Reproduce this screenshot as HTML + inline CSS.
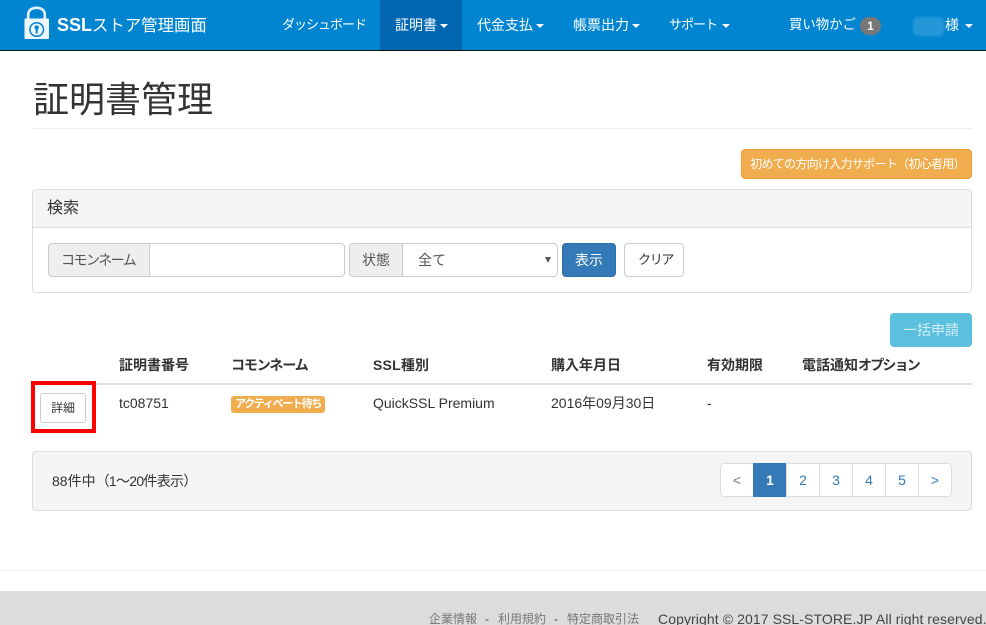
<!DOCTYPE html>
<html lang="ja">
<head>
<meta charset="utf-8">
<title>証明書管理</title>
<style>
html,body{margin:0;padding:0;width:986px;height:625px;overflow:hidden;background:#fff}
body{position:relative;font-family:"Liberation Sans","Noto Sans CJK JP",sans-serif;font-size:14px;color:#333}
.a{position:absolute;white-space:nowrap;box-sizing:border-box}
.nav{color:#fff;top:15px;line-height:20px;font-size:14px}
.caret{display:inline-block;width:0;height:0;border-top:4px solid #fff;border-left:4px solid transparent;border-right:4px solid transparent;vertical-align:middle;margin-left:3px}
.th{top:355px;line-height:20px;font-weight:bold;font-size:14px;color:#333}
.td{top:393px;line-height:20px;font-size:14px;color:#333}
.box{border:1px solid #ddd;border-radius:4px}
.pg{top:463px;height:34px;width:34px;border:1px solid #ddd;margin-left:-1px;background:#fff;color:#337ab7;text-align:center;line-height:32px;font-size:14px}
.ft{top:610px;line-height:18px;font-size:12px;color:#777}
</style>
</head>
<body>
<!-- nav -->
<div class="a" style="left:0;top:0;width:986px;height:51px;background:#0285d1;border-bottom:1px solid #111"></div>
<div class="a" style="left:380px;top:0;width:82px;height:50px;background:#0066b0"></div>
<svg class="a" style="left:24px;top:5px" width="26" height="35" viewBox="0 0 26 35">
<path d="M4.200 15V10C4.200 5 8 2.800 12.500 2.800s8.300 2.200 8.300 7.200V15" fill="none" stroke="#e4f1fa" stroke-width="2.600"/>
<rect x="0.500" y="13.500" width="24.500" height="20.500" rx="1" fill="#eef7fc"/>
<circle cx="12.700" cy="24.500" r="6.800" fill="none" stroke="#0285d1" stroke-width="1.500"/>
<circle cx="12.700" cy="22.500" r="2.200" fill="#0285d1"/>
<rect x="11.700" y="22.500" width="2" height="6" fill="#0285d1"/>
</svg>
<div class="a" style="left:57px;top:13px;line-height:24px;font-size:18px;color:#fff"><b>SSL</b><span style="font-size:16.400px">ストア管理画面</span></div>
<div class="a nav" style="left:282px;font-size:13px;letter-spacing:-1px">ダッシュボード</div>
<div class="a nav" style="left:395px">証明書<span class="caret"></span></div>
<div class="a nav" style="left:477px">代金支払<span class="caret"></span></div>
<div class="a nav" style="left:573px">帳票出力<span class="caret"></span></div>
<div class="a nav" style="left:669px;font-size:13px;letter-spacing:-1px">サポート<span class="caret" style="margin-left:5px"></span></div>
<div class="a nav" style="left:789px;font-size:13.400px">買い物かご</div>
<div class="a" style="left:860px;top:17px;width:21px;height:18px;border-radius:10px;background:#777;color:#fff;font-weight:bold;font-size:12px;line-height:18px;text-align:center">1</div>
<div class="a" style="left:913px;top:17px;width:31px;height:19px;border-radius:5px;background:#2497d8;filter:blur(1px)"></div>
<div class="a nav" style="left:945px">様<span class="caret" style="margin-left:6px"></span></div>

<!-- heading -->
<div class="a" style="left:33px;top:76px;line-height:48px;font-size:36px;color:#333">証明書管理</div>
<div class="a" style="left:32px;top:128px;width:940px;height:1px;background:#eee"></div>

<!-- beginner button -->
<div class="a" style="left:741px;top:149px;width:231px;height:30px;background:#f0ad4e;border:1px solid #eea236;border-radius:4px;color:#fff;font-size:12px;line-height:28px;text-align:center;letter-spacing:-.7px;padding-left:2px">初めての方向け入力サポート（初心者用）</div>

<!-- search panel -->
<div class="a box" style="left:32px;top:189px;width:940px;height:104px;background:#fff"></div>
<div class="a" style="left:33px;top:190px;width:938px;height:38px;background:#f5f5f5;border-bottom:1px solid #ddd;border-radius:3px 3px 0 0"></div>
<div class="a" style="left:47px;top:199px;line-height:20px;font-size:16px;color:#333">検索</div>

<div class="a" style="left:48px;top:243px;width:102px;height:34px;background:#eee;border:1px solid #ccc;border-radius:4px 0 0 4px;color:#555;line-height:32px;font-size:14px;letter-spacing:-1.500px;padding-left:12px">コモンネーム</div>
<div class="a" style="left:149px;top:243px;width:196px;height:34px;background:#fff;border:1px solid #ccc;border-radius:0 4px 4px 0"></div>
<div class="a" style="left:349px;top:243px;width:54px;height:34px;background:#eee;border:1px solid #ccc;border-radius:4px 0 0 4px;color:#555;text-align:center;line-height:32px">状態</div>
<div class="a" style="left:402px;top:243px;width:156px;height:34px;background:#fff;border:1px solid #ccc;border-radius:0 4px 4px 0;color:#555;line-height:32px;padding-left:15px">全て</div>
<div class="a" style="left:545px;top:257px;width:0;height:0;border-top:6px solid #555;border-left:3px solid transparent;border-right:3px solid transparent"></div>
<div class="a" style="left:562px;top:243px;width:54px;height:34px;background:#337ab7;border:1px solid #2e6da4;border-radius:4px;color:#fff;text-align:center;line-height:32px">表示</div>
<div class="a" style="left:624px;top:243px;width:60px;height:34px;background:#fff;border:1px solid #ccc;border-radius:4px;color:#333;line-height:32px;font-size:13px;letter-spacing:-1.300px;padding-left:13px">クリア</div>

<!-- bulk -->
<div class="a" style="left:890px;top:313px;width:82px;height:34px;background:#5bc0de;border-radius:4px;color:#d3eef6;text-align:center;line-height:34px">一括申請</div>

<!-- table -->
<div class="a th" style="left:119px">証明書番号</div>
<div class="a th" style="left:231px;letter-spacing:-1.100px">コモンネーム</div>
<div class="a th" style="left:373px;letter-spacing:.2px">SSL種別</div>
<div class="a th" style="left:551px">購入年月日</div>
<div class="a th" style="left:707px">有効期限</div>
<div class="a th" style="left:802px">電話通知<span style="letter-spacing:-1.800px">オプション</span></div>
<div class="a" style="left:32px;top:383px;width:940px;height:2px;background:#ddd"></div>

<div class="a" style="left:31px;top:381px;width:65px;height:52px;border:4px solid #f00"></div>
<div class="a" style="left:40px;top:393px;width:46px;height:30px;background:#fff;border:1px solid #ccc;border-radius:3px;font-size:12px;line-height:28px;text-align:center;color:#333">詳細</div>
<div class="a td" style="left:119px">tc08751</div>
<div class="a" style="left:231px;top:396px;width:94px;height:17px;background:#f0ad4e;border-radius:3px;color:#fff;font-weight:bold;font-size:11px;line-height:16px;text-align:center;letter-spacing:-1.300px">アクティベート待ち</div>
<div class="a td" style="left:373px">QuickSSL Premium</div>
<div class="a td" style="left:551px">2016年09月30日</div>
<div class="a td" style="left:707px">-</div>

<!-- pagination panel -->
<div class="a box" style="left:32px;top:451px;width:940px;height:60px;background:#f5f5f5"></div>
<div class="a" style="left:52px;top:471px;line-height:20px;color:#333">88件中<span style="letter-spacing:-.7px">（1～20件表示）</span></div>
<div class="a pg" style="left:721px;color:#777;border-radius:4px 0 0 4px">&lt;</div>
<div class="a pg" style="left:754px;background:#337ab7;border-color:#337ab7;color:#fff;font-weight:bold">1</div>
<div class="a pg" style="left:787px">2</div>
<div class="a pg" style="left:820px">3</div>
<div class="a pg" style="left:853px">4</div>
<div class="a pg" style="left:886px">5</div>
<div class="a pg" style="left:919px;border-radius:0 4px 4px 0;color:#337ab7">&gt;</div>

<!-- footer -->
<div class="a" style="left:0;top:570px;width:986px;height:1px;background:#eee"></div>
<div class="a" style="left:0;top:591px;width:986px;height:34px;background:#dcdcdc"></div>
<div class="a ft" style="left:429px">企業情報</div>
<div class="a ft" style="left:485px;color:#444">-</div>
<div class="a ft" style="left:498px">利用規約</div>
<div class="a ft" style="left:554px;color:#444">-</div>
<div class="a ft" style="left:567px">特定商取引法</div>
<div class="a" style="left:658px;top:609px;line-height:20px;font-size:14px;color:#444;letter-spacing:.09px">Copyright © 2017 SSL-STORE.JP All right reserved.</div>
</body>
</html>
